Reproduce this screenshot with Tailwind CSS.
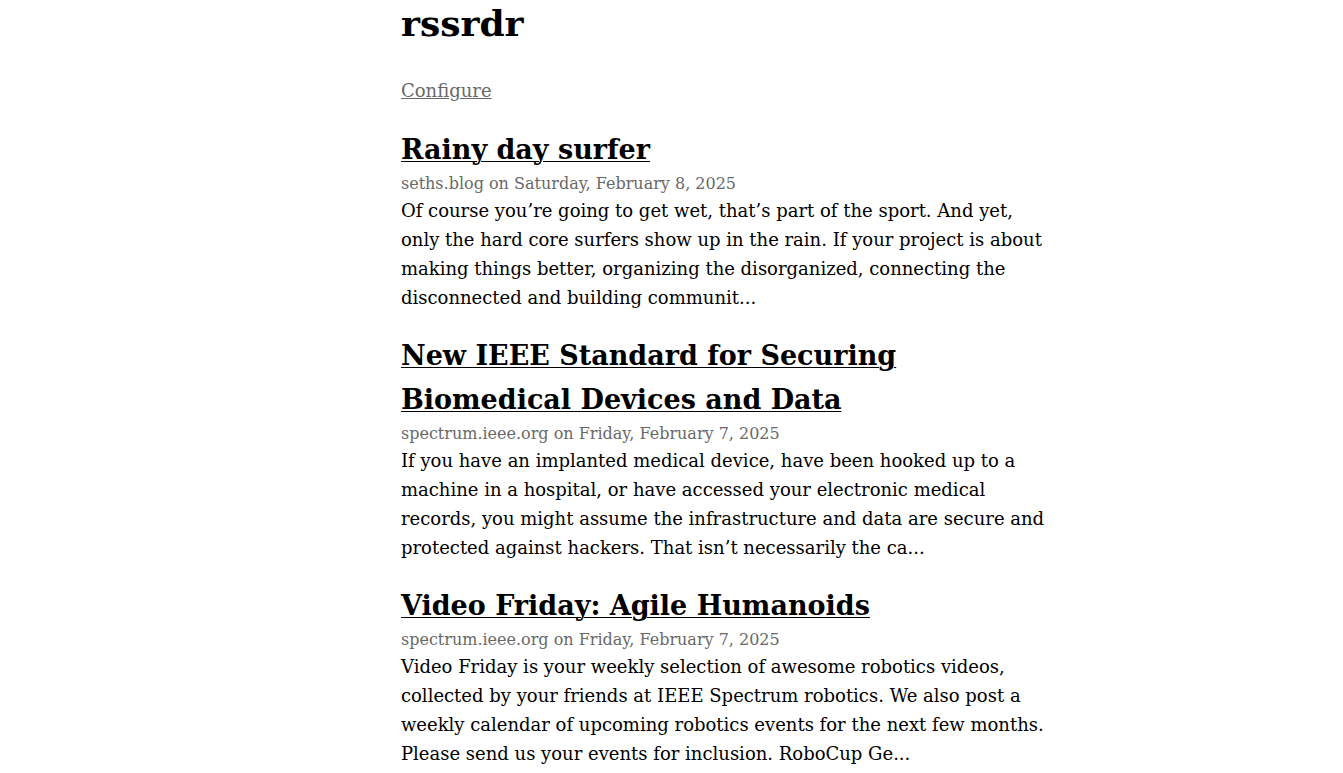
<!DOCTYPE html>
<html lang="en">
<head>
<meta charset="utf-8">
<meta name="viewport" content="width=device-width, initial-scale=1">
<title>rssrdr</title>
<script src="https://cdn.jsdelivr.net/npm/@tailwindcss/browser@4"></script>
</head>
<body class="grid grid-cols-[15fr_minmax(0,648px)_11fr] bg-white text-black font-['DejaVu_Serif',serif] text-[18px] leading-[29px]">
<main class="col-start-2">
<header>
<h1 class="text-4xl leading-[46px] font-bold">rssrdr</h1>
<nav class="mt-[30px]"><a href="#" class="text-[#696969] underline">Configure</a></nav>
</header>
<section class="mt-[23px] flex flex-col gap-[22px]">
<article>
<h2 class="text-[27px] leading-[44px] font-bold"><a href="#" class="underline decoration-1 underline-offset-2">Rainy day surfer</a></h2>
<p class="text-base leading-6 text-[#696969]">seths.blog on Saturday, February 8, 2025</p>
<p>Of course you’re going to get wet, that’s part of the sport. And yet, only the hard core surfers show up in the rain. If your project is about making things better, organizing the disorganized, connecting the disconnected and building communit...</p>
</article>
<article>
<h2 class="text-[27px] leading-[44px] font-bold"><a href="#" class="underline decoration-1 underline-offset-2">New IEEE Standard for Securing Biomedical Devices and Data</a></h2>
<p class="text-base leading-6 text-[#696969]">spectrum.ieee.org on Friday, February 7, 2025</p>
<p>If you have an implanted medical device, have been hooked up to a machine in a hospital, or have accessed your electronic medical records, you might assume the infrastructure and data are secure and protected against hackers. That isn’t necessarily the ca...</p>
</article>
<article>
<h2 class="text-[27px] leading-[44px] font-bold"><a href="#" class="underline decoration-1 underline-offset-2">Video Friday: Agile Humanoids</a></h2>
<p class="text-base leading-6 text-[#696969]">spectrum.ieee.org on Friday, February 7, 2025</p>
<p>Video Friday is your weekly selection of awesome robotics videos, collected by your friends at IEEE Spectrum robotics. We also post a weekly calendar of upcoming robotics events for the next few months. Please send us your events for inclusion. RoboCup Ge...</p>
</article>
</section>
</main>
</body>
</html>
